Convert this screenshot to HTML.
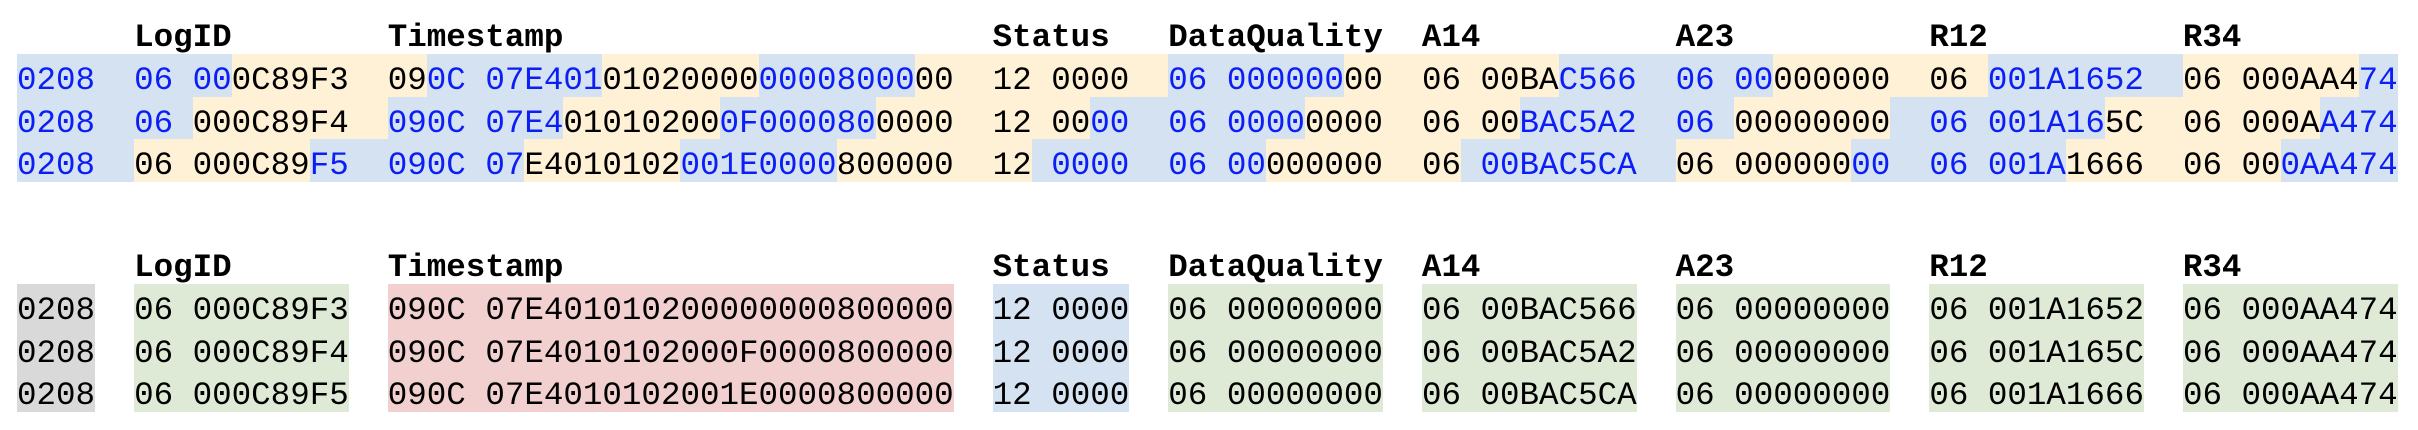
<!DOCTYPE html>
<html><head><meta charset="utf-8"><style>
html,body{margin:0;padding:0;background:#fff;width:2418px;height:430px;overflow:hidden}
.r{position:absolute;left:17px;white-space:pre;font-family:"Liberation Mono",monospace;font-size:32.53px;height:42.67px;}
.r span{display:inline-block;height:42.67px;line-height:53px;vertical-align:top;overflow:hidden}
.h{font-weight:bold;color:#000}
.B{background:#d5e2f1;color:#0a1ef5}
.Y{background:#fff1d5;color:#000}
.g{background:#d9d9d9}.gr{background:#deead6}.p{background:#f1d0cf}.b{background:#d5e2f1}
.w{background:transparent}
</style></head><body>
<div class="r h" style="top:11px"><span>      LogID        Timestamp                      Status   DataQuality  A14          A23          R12          R34</span></div>

<div class="r" style="top:54px"><span class="B">0208  06 00</span><span class="Y">0C89F3  09</span><span class="B">0C 07E401</span><span class="Y">01020000</span><span class="B">00008000</span><span class="Y">00  12 0000  </span><span class="B">06 000000</span><span class="Y">00  06 00BA</span><span class="B">C566  06 00</span><span class="Y">000000  06 </span><span class="B">001A1652  </span><span class="Y">06 000AA4</span><span class="B">74</span></div>
<div class="r" style="top:96.67px"><span class="B">0208  06 </span><span class="Y">000C89F4  </span><span class="B">090C 07E4</span><span class="Y">01010200</span><span class="B">0F000080</span><span class="Y">0000  12 00</span><span class="B">00  06 0000</span><span class="Y">0000  06 00</span><span class="B">BAC5A2  06 </span><span class="Y">00000000</span><span class="B">  06 001A16</span><span class="Y">5C  06 000A</span><span class="B">A474</span></div>
<div class="r" style="top:139.33px"><span class="B">0208  </span><span class="Y">06 000C89</span><span class="B">F5  090C 07</span><span class="Y">E4010102</span><span class="B">001E0000</span><span class="Y">800000  12</span><span class="B"> 0000  06 00</span><span class="Y">000000  06</span><span class="B"> 00BAC5CA  </span><span class="Y">06 000000</span><span class="B">00  06 001A</span><span class="Y">1666  06 00</span><span class="B">0AA474</span></div>

<div class="r h" style="top:241px"><span>      LogID        Timestamp                      Status   DataQuality  A14          A23          R12          R34</span></div>

<div class="r" style="top:284px"><span class="g">0208</span><span>  </span><span class="gr">06 000C89F3</span><span>  </span><span class="p">090C 07E401010200000000800000</span><span>  </span><span class="b">12 0000</span><span>  </span><span class="gr">06 00000000</span><span>  </span><span class="gr">06 00BAC566</span><span>  </span><span class="gr">06 00000000</span><span>  </span><span class="gr">06 001A1652</span><span>  </span><span class="gr">06 000AA474</span></div>
<div class="r" style="top:326.67px"><span class="g">0208</span><span>  </span><span class="gr">06 000C89F4</span><span>  </span><span class="p">090C 07E4010102000F0000800000</span><span>  </span><span class="b">12 0000</span><span>  </span><span class="gr">06 00000000</span><span>  </span><span class="gr">06 00BAC5A2</span><span>  </span><span class="gr">06 00000000</span><span>  </span><span class="gr">06 001A165C</span><span>  </span><span class="gr">06 000AA474</span></div>
<div class="r" style="top:369.33px"><span class="g">0208</span><span>  </span><span class="gr">06 000C89F5</span><span>  </span><span class="p">090C 07E4010102001E0000800000</span><span>  </span><span class="b">12 0000</span><span>  </span><span class="gr">06 00000000</span><span>  </span><span class="gr">06 00BAC5CA</span><span>  </span><span class="gr">06 00000000</span><span>  </span><span class="gr">06 001A1666</span><span>  </span><span class="gr">06 000AA474</span></div>
</body></html>
